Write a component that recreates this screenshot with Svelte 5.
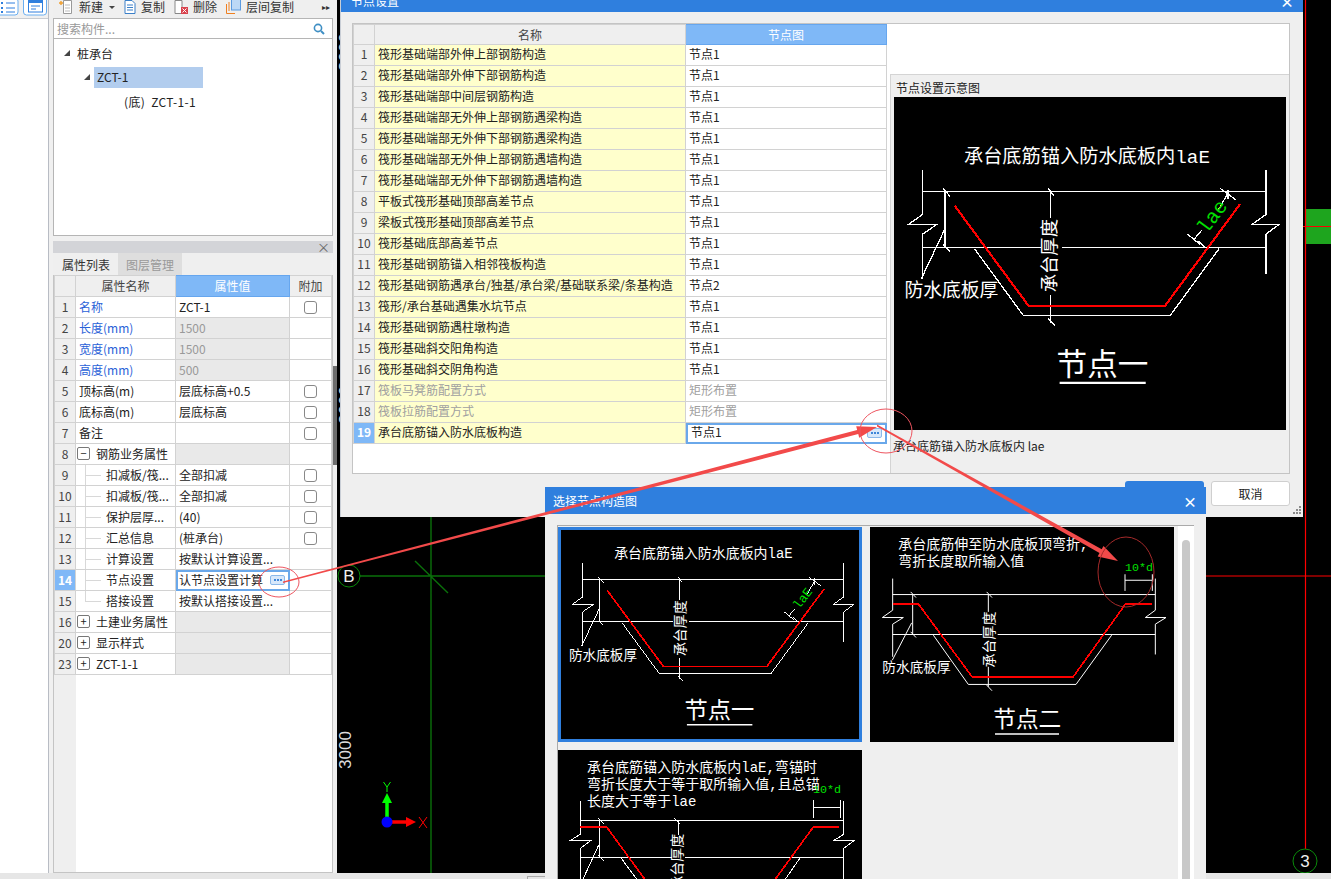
<script>
  const propRows = [
    { n: 1, name: "名称", value: "ZCT-1", blue: true, check: true },
    { n: 2, name: "长度(mm)", value: "1500", blue: true, locked: true },
    { n: 3, name: "宽度(mm)", value: "1500", blue: true, locked: true },
    { n: 4, name: "高度(mm)", value: "500", blue: true, locked: true },
    { n: 5, name: "顶标高(m)", value: "层底标高+0.5", check: true },
    { n: 6, name: "底标高(m)", value: "层底标高", check: true },
    { n: 7, name: "备注", value: "", check: true },
    { n: 8, name: "钢筋业务属性", group: "-" },
    { n: 9, name: "扣减板/筏...", value: "全部扣减", sub: true, check: true },
    { n: 10, name: "扣减板/筏...", value: "全部扣减", sub: true, check: true },
    { n: 11, name: "保护层厚...", value: "(40)", sub: true, check: true },
    { n: 12, name: "汇总信息", value: "(桩承台)", sub: true, check: true },
    { n: 13, name: "计算设置", value: "按默认计算设置...", sub: true },
    { n: 14, name: "节点设置", value: "认节点设置计算", sub: true, active: true },
    { n: 15, name: "搭接设置", value: "按默认搭接设置...", sub: true, last: true },
    { n: 16, name: "土建业务属性", group: "+" },
    { n: 20, name: "显示样式", group: "+" },
    { n: 23, name: "ZCT-1-1", group: "+" },
  ];

  const nodeRows = [
    ["筏形基础端部外伸上部钢筋构造", "节点1"],
    ["筏形基础端部外伸下部钢筋构造", "节点1"],
    ["筏形基础端部中间层钢筋构造", "节点1"],
    ["筏形基础端部无外伸上部钢筋遇梁构造", "节点1"],
    ["筏形基础端部无外伸下部钢筋遇梁构造", "节点1"],
    ["筏形基础端部无外伸上部钢筋遇墙构造", "节点1"],
    ["筏形基础端部无外伸下部钢筋遇墙构造", "节点1"],
    ["平板式筏形基础顶部高差节点", "节点1"],
    ["梁板式筏形基础顶部高差节点", "节点1"],
    ["筏形基础底部高差节点", "节点1"],
    ["筏形基础钢筋锚入相邻筏板构造", "节点1"],
    ["筏形基础钢筋遇承台/独基/承台梁/基础联系梁/条基构造", "节点2"],
    ["筏形/承台基础遇集水坑节点", "节点1"],
    ["筏形基础钢筋遇柱墩构造", "节点1"],
    ["筏形基础斜交阳角构造", "节点1"],
    ["筏形基础斜交阴角构造", "节点1"],
    ["筏板马凳筋配置方式", "矩形布置", "off"],
    ["筏板拉筋配置方式", "矩形布置", "off"],
    ["承台底筋锚入防水底板构造", "节点1", "active"],
  ];

  // drawings are written in 3x coordinates of the thumbnail
  const node1 = {
    view: "48 150 897 630",
    white: [
      "113,300 899,300", "113,427 385,427", "432,427 899,427",
      "113,250 113,352 82,374 147,374 113,397 113,500",
      "899,250 899,352 868,374 930,374 899,397 899,488",
      "165,300 165,427", "160,292 176,310", "160,420 176,437",
      "406,300 406,360", "406,535 406,600", "400,292 414,308", "400,590 416,606",
      "163,388 110,500", "232,430 344,583 680,583 792,430",
      "720,397 748,420", "745,412 760,427", "735,408 752,388", "790,342 812,303",
      "794,292 830,318", "812,296 812,316",
    ],
    red: ["187,332 356,561 668,561 840,328"],
    bars: ["427,737 624,737"],
    texts: [
      { t: "承台底筋锚入防水底板内laE", x: 208, y: 221, s: 42 },
      { t: "防水底板厚", x: 72, y: 530, s: 41 },
      { t: "节点一", x: 420, y: 700, s: 70 },
      { t: "承台厚度", x: 408, y: 446, s: 42, rot: -90, mid: true },
      { t: "laE", x: 778, y: 358, s: 38, rot: -53, mid: true, green: true },
    ],
  };

  const preview = {
    ...node1,
    view: "48 83 897 762",
    texts: [
      { t: "承台底筋锚入防水底板内laE", x: 208, y: 222, s: 44 },
      { t: "防水底板厚", x: 72, y: 530, s: 43 },
      { t: "节点一", x: 420, y: 700, s: 70 },
      { t: "承台厚度", x: 408, y: 446, s: 42, rot: -90, mid: true },
      { t: "lae", x: 778, y: 358, s: 46, rot: -53, mid: true, green: true },
    ],
  };

  const node2 = {
    view: "15 140 912 646",
    white: [
      "83,343 871,343", "83,463 352,463", "398,463 871,463",
      "83,295 83,390 52,412 115,412 83,432 83,530",
      "871,295 871,390 841,412 903,412 871,432 871,523",
      "143,343 143,463", "137,335 153,352", "137,455 153,472",
      "370,343 370,395", "370,560 370,620", "365,335 381,352", "365,615 381,632",
      "140,428 82,540", "205,465 310,613 633,613 740,465",
      "780,300 862,300", "780,282 780,332", "862,282 862,332",
    ],
    red: ["83,371 160,371 322,591 624,591 782,371 860,371"],
    bars: ["390,762 582,762"],
    texts: [
      { t: "承台底筋伸至防水底板顶弯折,", x: 100, y: 195, s: 42 },
      { t: "弯折长度取所输入值", x: 100, y: 245, s: 42 },
      { t: "10*d", x: 780, y: 262, s: 35, green: true },
      { t: "防水底板厚", x: 52, y: 565, s: 41 },
      { t: "节点二", x: 385, y: 722, s: 68 },
      { t: "承台厚度", x: 375, y: 478, s: 42, rot: -90, mid: true },
    ],
  };

  const node3 = {
    view: "40 15 910 645",
    white: [
      "107,227 895,227", "107,338 380,338", "420,338 895,338",
      "107,168 107,268 76,287 138,287 107,310 107,500",
      "895,168 895,268 865,287 926,287 895,310 895,450",
      "165,227 165,338", "160,220 176,236", "160,330 176,347",
      "400,227 400,270", "388,220 405,236",
      "162,300 115,402", "228,338 340,490 660,490 765,338",
      "806,187 885,187", "806,165 806,218", "885,165 885,218",
    ],
    red: ["107,245 185,245 340,458 650,458 805,245 882,245"],
    bars: [],
    texts: [
      { t: "承台底筋锚入防水底板内laE,弯锚时", x: 127, y: 68, s: 42 },
      { t: "弯折长度大于等于取所输入值,且总锚", x: 127, y: 120, s: 42 },
      { t: "长度大于等于lae", x: 127, y: 172, s: 42 },
      { t: "10*d", x: 803, y: 135, s: 35, green: true },
      { t: "承台厚度", x: 400, y: 350, s: 42, rot: -90, mid: true },
    ],
  };
</script>

{#snippet drawing(d)}
  <svg class="draw" viewBox={d.view} preserveAspectRatio="none">
    {#each d.white as p}
      <polyline points={p} fill="none" stroke="#fff" stroke-width="3" shape-rendering="crispEdges" />
    {/each}
    {#each d.red as p}
      <polyline points={p} fill="none" stroke="#f00" stroke-width="5" shape-rendering="crispEdges" />
    {/each}
    {#each d.bars as p}
      <polyline points={p} fill="none" stroke="#fff" stroke-width="5" />
    {/each}
    {#each d.texts as x}
      <text
        x={x.x}
        y={x.y}
        font-size={x.s}
        fill={x.green ? "#00e000" : "#fff"}
        text-anchor={x.mid ? "middle" : "start"}
        dominant-baseline="central"
        transform={x.rot ? `rotate(${x.rot} ${x.x} ${x.y})` : undefined}>{x.t}</text>
    {/each}
  </svg>
{/snippet}

{#snippet ellipsis()}
  <span class="more"><i></i><i></i><i></i></span>
{/snippet}

<div class="screen">
  <div class="rail">
    <div class="rail-bar">
      <svg width="48" height="18" viewBox="0 0 48 18">
        <path d="M-3 -2 H15 a3 3 0 0 1 3 3 V12 a3 3 0 0 1 -3 3 H-3" fill="#fff" stroke="#6aaef0" />
        <path d="M1 3h2M1 8h2M1 12h2" stroke="#2f7fde" stroke-width="2" />
        <path d="M6 3h9M6 8h9M6 12h9" stroke="#2f7fde" />
        <rect x="23.5" y="-3" width="23" height="18" rx="3" fill="#fff" stroke="#6aaef0" />
        <rect x="28.5" y="-1" width="14" height="13" fill="#fff" stroke="#2f7fde" />
        <rect x="28" y="-1" width="15" height="4" fill="#2f7fde" />
        <path d="M31 6h9M31 9h5" stroke="#2f7fde" />
      </svg>
    </div>
  </div>

  <div class="side">
    <div class="tools">
      <svg class="ti" width="15" height="14" viewBox="0 0 15 14">
        <path d="M4.5 0.5H12.5V13.5H4.5Z" fill="#fff" stroke="#999" />
        <path d="M6 5h5M6 8h5M6 11h5" stroke="#bbb" />
        <path d="M2 1v4M0 3h4" stroke="#f0a030" stroke-width="1.4" />
      </svg>
      <span class="tl">新建</span>
      <span class="caret"></span>
      <svg class="ti t2" width="12" height="14" viewBox="0 0 12 14">
        <path d="M1 0.5H8L11 3.5V13.5H1Z" fill="#fff" stroke="#3a7fc8" />
        <path d="M3 5h6M3 7.5h6M3 10h6" stroke="#3a7fc8" />
      </svg>
      <span class="tl">复制</span>
      <svg class="ti t3" width="14" height="14" viewBox="0 0 14 14">
        <path d="M1 0.5H8V13.5H1Z" fill="#fff" stroke="#888" />
        <rect x="7" y="7" width="7" height="7" fill="#d9434e" />
        <path d="M8.5 8.5l4 4M12.5 8.5l-4 4" stroke="#fff" />
      </svg>
      <span class="tl">删除</span>
      <svg class="ti t4" width="15" height="14" viewBox="0 0 15 14">
        <path d="M0.5 13.5V4M0.5 13.5H9M3 11V2" fill="none" stroke="#f08020" />
        <rect x="5.5" y="-2" width="9" height="12" fill="#bcd8f6" stroke="#5a9ae0" />
      </svg>
      <span class="tl">层间复制</span>
      <span class="chev">▸▸</span>
    </div>
    <div class="search">
      <span>搜索构件...</span>
      <svg width="12" height="12" viewBox="0 0 12 12">
        <circle cx="5" cy="5" r="3.6" fill="none" stroke="#3f8fc4" stroke-width="1.6" />
        <path d="M8 8l3 3" stroke="#3f8fc4" stroke-width="2" />
      </svg>
    </div>
    <div class="tree">
      <div class="node lv0"><span class="tri"></span>桩承台</div>
      <div class="node lv1"><span class="tri"></span><span class="sel">ZCT-1</span></div>
      <div class="node lv2">(底)&nbsp; ZCT-1-1</div>
    </div>

    <div class="props">
      <div class="props-bar"><span>×</span></div>
      <div class="tabs">
        <div class="tab on">属性列表</div>
        <div class="tab">图层管理</div>
      </div>
      <div class="ptable">
        <table class="grid">
          <colgroup><col style="width:21px" /><col style="width:100px" /><col style="width:114px" /><col style="width:42px" /></colgroup>
          <thead>
            <tr><th></th><th>属性名称</th><th class="hl">属性值</th><th>附加</th></tr>
          </thead>
          <tbody>
            {#each propRows as r}
              <tr>
                <td class="num" class:cur={r.active}>{r.n}</td>
                <td class="pname" class:blue={r.blue} class:sub={r.sub} class:last={r.last}>
                  {#if r.group}<span class="box">{r.group === "-" ? "−" : "+"}</span>{/if}{r.name}
                </td>
                <td class="pval" class:locked={r.locked} class:shade={r.group} class:editing={r.active}>
                  {r.value ?? ""}{#if r.active}{@render ellipsis()}{/if}
                </td>
                <td class="padd">{#if r.check}<span class="check"></span>{/if}</td>
              </tr>
            {/each}
          </tbody>
        </table>
      </div>
    </div>
  </div>

  <div class="splitter"><div class="handle"></div></div>

  <div class="canvas">
    <svg class="cad" viewBox="337 0 994 873">
      <path d="M360 576H1206M431 500V873M415 561L448 593" stroke="#0a700a" stroke-width="1.4" fill="none" />
      <circle cx="349" cy="576" r="11" fill="#000" stroke="#0a8a0a" />
      <text x="349" y="582" class="cad-b" text-anchor="middle">B</text>
      <text class="cad-n" transform="rotate(-90 351 750)" x="351" y="750" text-anchor="middle">3000</text>
      <text class="cad-n" transform="rotate(-90 351 52)" x="351" y="52" text-anchor="middle">3000</text>
      <text class="cad-n" transform="rotate(-90 351 405)" x="351" y="405" text-anchor="middle">3000</text>

      <path d="M387 822V797" stroke="#00ff00" stroke-width="3.5" />
      <path d="M387 793l5 10h-10z" fill="#00ff00" />
      <path d="M387 822H408" stroke="#f00" stroke-width="3.5" />
      <path d="M416 822l-10 -5v10z" fill="#f00" />
      <circle cx="387" cy="822" r="5.5" fill="#0000ff" />
      <path d="M383.5 782l3.5 5 3.5 -5M387 787v5" stroke="#00ff00" fill="none" />
      <path d="M419 817l8 11M427 817l-8 11" stroke="#f00" fill="none" />

      <rect x="1305" y="209" width="26" height="35" fill="#1ea51e" />
      <path d="M1303 226.5H1331M1205 576H1331M1305.5 0V849" stroke="#f00" stroke-width="1.2" fill="none" />
      <circle cx="1305" cy="861" r="12" fill="#000" stroke="#0a8a0a" />
      <text x="1305" y="867" class="cad-b" text-anchor="middle">3</text>
    </svg>
  </div>

  <div class="status"><span></span></div>

  <div class="dialog nodes">
    <div class="dtitle short"><span>节点设置</span><em>×</em></div>
    <div class="dbody">
      <div class="nwrap">
        <table class="grid ntable">
          <colgroup><col style="width:21px" /><col style="width:311px" /><col style="width:201px" /></colgroup>
          <thead>
            <tr><th></th><th>名称</th><th class="hl">节点图</th></tr>
          </thead>
          <tbody>
            {#each nodeRows as r, i}
              <tr class={r[2] ?? ""}>
                <td class="num" class:cur={r[2] === "active"}>{i + 1}</td>
                <td class="yname">{r[0]}</td>
                <td class="nval" class:editing={r[2] === "active"}>
                  {r[1]}{#if r[2] === "active"}{@render ellipsis()}{/if}
                </td>
              </tr>
            {/each}
          </tbody>
        </table>
        <div class="pv">
          <div class="pv-title">节点设置示意图</div>
          <div class="pv-img">{@render drawing(preview)}</div>
          <div class="pv-desc">承台底筋锚入防水底板内 lae</div>
        </div>
      </div>
      <div class="foot">
        <button class="ok">确定</button>
        <button class="cancel">取消</button>
      </div>
    </div>
    <svg class="grip" width="9" height="9" viewBox="0 0 9 9">
      <path d="M6 0h2v2H6zM3 3h2v2H3zM6 3h2v2H6zM0 6h2v2H0zM3 6h2v2H3zM6 6h2v2H6z" fill="#8a8a8a" />
    </svg>
  </div>

  <div class="dialog picker">
    <div class="dtitle tall"><span>选择节点构造图</span><em>×</em></div>
    <div class="pbody">
      <div class="frame">
        <div class="cards">
          <div class="card picked">{@render drawing(node1)}</div>
          <div class="card">{@render drawing(node2)}</div>
          <div class="card">{@render drawing(node3)}</div>
        </div>
        <div class="track"><div class="thumb"></div></div>
      </div>
    </div>
  </div>

  <svg class="marks" viewBox="0 0 1331 879">
    <polygon points="283,581.5 857.15,429.9 856.2,426.2 877,427 859.2,437.8 858.25,434.1 283,583" fill="#f24a4a" />
    <polygon points="877,424.5 1101.7,549.3 1103.5,546 1118,561 1097.7,556.4 1099.5,553.1 877,426.5" fill="#f24a4a" />
    <ellipse cx="279" cy="582" rx="20" ry="15" fill="none" stroke="#ee5560" />
    <ellipse cx="886" cy="431" rx="26" ry="22" fill="none" stroke="#ee5560" />
    <ellipse cx="1126" cy="572" rx="28" ry="35" fill="none" stroke="#a52a2a" />
  </svg>
</div>

<style>
  :global(body) {
    margin: 0;
    background: #000;
  }

  .screen {
    position: relative;
    width: 1331px;
    height: 879px;
    overflow: hidden;
    display: grid;
    grid-template-columns: 49px 284px 4px 1fr;
    grid-template-rows: 873px 6px;
    font-family: "Noto Sans CJK SC", sans-serif;
    font-size: 12px;
    line-height: 20px;
    color: #222;
    background: #f0f0f0;
  }

  .rail {
    background: #fff;
    border-right: 1px solid #b8bcc4;
    box-sizing: border-box;
  }

  .rail-bar {
    height: 18px;
    background: #f0f0f0;
    border-bottom: 1px solid #c8ccd2;
  }

  .rail-bar svg {
    display: block;
  }

  .side {
    display: flex;
    flex-direction: column;
    padding-left: 4px;
  }

  .tools {
    height: 19px;
    display: flex;
    align-items: center;
    overflow: hidden;
    background: #efefef;
    border-bottom: 1px solid #b5b5b5;
    box-sizing: border-box;
    padding-left: 6px;
  }

  .ti {
    flex: none;
    margin-top: -5px;
  }

  .t2 {
    margin-left: 9px;
  }

  .t3 {
    margin-left: 9px;
  }

  .t4 {
    margin-left: 9px;
  }

  .tl {
    margin: -4px 0 0 5px;
    color: #333;
  }

  .caret {
    width: 0;
    height: 0;
    margin: -3px 0 0 6px;
    border-left: 3px solid transparent;
    border-right: 3px solid transparent;
    border-top: 3px solid #444;
  }

  .chev {
    margin: -4px 0 0 auto;
    padding-right: 3px;
    font-size: 8px;
    color: #333;
  }

  .search {
    height: 19px;
    display: flex;
    align-items: center;
    justify-content: space-between;
    padding: 0 7px 0 3px;
    background: #fff;
    color: #999;
    border-left: 1px solid #b5b5b5;
    border-right: 1px solid #b5b5b5;
  }

  .tree {
    height: 198px;
    box-sizing: border-box;
    background: #fff;
    border: 1px solid #b5b5b5;
    padding-top: 4px;
  }

  .node {
    position: relative;
    height: 21px;
    line-height: 20px;
    display: flex;
    align-items: center;
    margin-bottom: 3px;
  }

  .lv0 {
    padding-left: 23px;
  }

  .lv1 {
    padding-left: 40px;
    margin-bottom: 3px;
  }

  .lv2 {
    padding-left: 70px;
    letter-spacing: 0.35px;
  }

  .sel {
    display: block;
    width: 106px;
    height: 21px;
    padding-left: 3px;
    background: #b2cdee;
  }

  .tri {
    position: absolute;
    width: 0;
    height: 0;
    border-left: 6px solid transparent;
    border-bottom: 6px solid #444;
  }

  .lv0 .tri {
    left: 10px;
    top: 7px;
  }

  .lv1 .tri {
    left: 30px;
    top: 7px;
  }

  .props {
    margin-top: 5px;
    flex: 1;
    display: flex;
    flex-direction: column;
    min-height: 0;
  }

  .props-bar {
    height: 12px;
    background: #d3d4d8;
    color: #666;
    font-size: 13px;
    line-height: 12px;
    text-align: right;
    padding-right: 3px;
  }

  .tabs {
    height: 22px;
    display: flex;
    background: #efefef;
    padding-left: 1px;
  }

  .tab {
    width: 64px;
    text-align: center;
    line-height: 24px;
    color: #999;
    background: #dedede;
  }

  .tab.on {
    color: #333;
    background: #efefef;
  }

  .ptable {
    flex: 1;
    position: relative;
    background: linear-gradient(to right, #efefef 22px, #fff 22px);
    border: 1px solid #c4c4c4;
    border-top: none;
    box-sizing: border-box;
    padding-right: 1px;
  }

  .grid {
    table-layout: fixed;
    border-collapse: collapse;
    width: 100%;
  }

  .grid th,
  .grid td {
    height: 20px;
    padding: 0;
    border: 1px solid #d2d2d2;
    box-sizing: border-box;
    font-weight: 400;
    line-height: 20px;
    white-space: nowrap;
    overflow: hidden;
    position: relative;
  }

  .grid th {
    background: #efefef;
    color: #444;
    text-align: center;
  }

  .grid th.hl {
    background: #7fb8f7;
    color: #fff;
    border-color: #66a6ee;
  }

  .ntable th {
    height: 19px;
    line-height: 19px;
  }

  .ntable td {
    line-height: 18px;
    padding-bottom: 2px;
  }

  .num {
    background: #efefef;
    color: #444;
    text-align: center;
  }

  .num.cur {
    background: #7fb8f7;
    color: #fff;
    font-weight: 700;
  }

  .pname {
    padding-left: 3px !important;
  }

  .blue {
    color: #2a62d8;
  }

  .sub {
    padding-left: 30px !important;
  }

  .sub::before {
    content: "";
    position: absolute;
    left: 9px;
    top: 10px;
    width: 16px;
    border-top: 1px solid #d8d8d8;
  }

  .sub::after {
    content: "";
    position: absolute;
    left: 9px;
    top: 0;
    height: 21px;
    border-left: 1px solid #d8d8d8;
  }

  .sub.last::after {
    height: 10px;
  }

  .box {
    display: inline-block;
    width: 11px;
    height: 11px;
    margin: 0 6px 0 -2px;
    border: 1px solid #777;
    border-radius: 2px;
    font-size: 11px;
    line-height: 10px;
    text-align: center;
    vertical-align: 1px;
  }

  .pval {
    padding-left: 3px !important;
  }

  .locked {
    background: #e9e9e9;
    color: #999;
  }

  .shade {
    background: #e9e9e9;
  }

  .editing {
    outline: 2px solid #6aa8ea;
    outline-offset: -2px;
  }

  .more {
    position: absolute;
    right: 4px;
    top: 5px;
    width: 15px;
    height: 10px;
    box-sizing: border-box;
    display: flex;
    align-items: center;
    justify-content: center;
    gap: 1px;
    background: #d7e8fb;
    border: 1px solid #8ab8ea;
    border-radius: 2px;
  }

  .more i {
    width: 2px;
    height: 2px;
    background: #3f86d8;
  }

  .padd {
    text-align: center;
  }

  .check {
    display: block;
    width: 13px;
    height: 13px;
    margin: 0 auto;
    border: 1px solid #888;
    border-radius: 3px;
    box-sizing: border-box;
  }

  .splitter {
    background: #efefef;
    padding-top: 366px;
  }

  .handle {
    height: 99px;
    background: #6d6d6d;
  }

  .canvas {
    background: #000;
    position: relative;
  }

  .cad {
    display: block;
    width: 100%;
    height: 100%;
  }

  .cad-b {
    font-family: "Liberation Sans", sans-serif;
    font-size: 17px;
    fill: #eee;
  }

  .cad-n {
    font-family: "Liberation Sans", sans-serif;
    font-size: 17px;
    fill: #ddd;
  }

  .status {
    grid-column: 1 / -1;
    background: #e6e6e6;
    position: relative;
  }

  .status span {
    position: absolute;
    left: 527px;
    top: 3px;
    width: 18px;
    height: 4px;
    border: 1px solid #aaa;
  }

  .dialog {
    position: absolute;
    background: #efefef;
  }

  .nodes {
    left: 340px;
    top: 0;
    width: 963px;
    height: 517px;
    border-left: 1px solid #c9ced6;
    box-sizing: border-box;
  }

  .picker {
    left: 545px;
    top: 487px;
    width: 661px;
    height: 392px;
  }

  .dtitle {
    background: #2f7fde;
    color: #fff;
    overflow: hidden;
    display: flex;
    justify-content: space-between;
  }

  .dtitle em {
    font-style: normal;
    font-size: 14px;
    font-weight: 700;
  }

  .short {
    height: 12px;
    padding: 0 9px 0 10px;
  }

  .short span,
  .short em {
    margin-top: -9px;
  }

  .tall {
    height: 27px;
    align-items: center;
    padding: 0 9px 0 8px;
  }

  .dbody {
    padding: 11px 13px 0 11px;
  }

  .nwrap {
    height: 451px;
    box-sizing: border-box;
    background: #fff;
    border: 1px solid #c4c4c4;
    display: flex;
    justify-content: space-between;
    align-items: flex-end;
    position: relative;
  }

  .ntable {
    width: 533px;
    align-self: flex-start;
  }

  .yname {
    background: #ffffcc;
    padding-left: 3px !important;
  }

  .nval {
    padding-left: 3px !important;
  }

  .off .yname,
  .off .nval {
    color: #a0a0a0;
  }

  .nval.editing {
    padding-left: 5px !important;
  }

  .pv {
    width: 399px;
    height: 399px;
    box-sizing: border-box;
    background: #efefef;
    border-top: 1px solid #d4d4d4;
    border-left: 1px solid #d4d4d4;
    padding: 3px 3px 0 3px;
  }

  .pv-title {
    height: 19px;
    padding-left: 2px;
    line-height: 19px;
  }

  .pv-img {
    height: 333px;
    background: #000;
  }

  .pv-desc {
    padding-top: 6px;
    margin-left: -1px;
  }

  .foot {
    display: flex;
    justify-content: flex-end;
    gap: 7px;
    padding: 7px 0 0 0;
  }

  .foot button {
    width: 79px;
    height: 25px;
    padding: 0;
    font: inherit;
    border-radius: 3px;
  }

  .ok {
    background: #2f7fde;
    color: #fff;
    border: none;
  }

  .cancel {
    background: #fff;
    color: #222;
    border: 1px solid #cfcfcf;
  }

  .grip {
    position: absolute;
    right: 1px;
    bottom: 2px;
  }

  .pbody {
    padding: 11px 12px 0 12px;
    height: 100%;
    box-sizing: border-box;
  }

  .frame {
    display: flex;
    width: 637px;
    height: 100%;
    border-top: 1px solid #aaa;
    border-left: 1px solid #aaa;
    box-sizing: border-box;
  }

  .cards {
    flex: 1;
    display: grid;
    grid-template-columns: 304px 304px;
    grid-auto-rows: 215px;
    gap: 8px;
    padding-top: 1px;
  }

  .card {
    background: #000;
    box-sizing: border-box;
  }

  .card.picked {
    border: 3px solid #2f7fde;
  }

  .draw {
    display: block;
    width: 100%;
    height: 100%;
  }

  .draw text {
    font-family: "Liberation Mono", "Noto Sans CJK SC", monospace;
  }

  .track {
    width: 16px;
    background: #fff;
    flex: none;
    padding-top: 14px;
    box-sizing: border-box;
  }

  .thumb {
    width: 8px;
    height: 400px;
    margin-left: 4px;
    background: #c8c8c8;
    border-radius: 4px;
  }

  .marks {
    position: absolute;
    left: 0;
    top: 0;
    width: 1331px;
    height: 879px;
    pointer-events: none;
  }
</style>
